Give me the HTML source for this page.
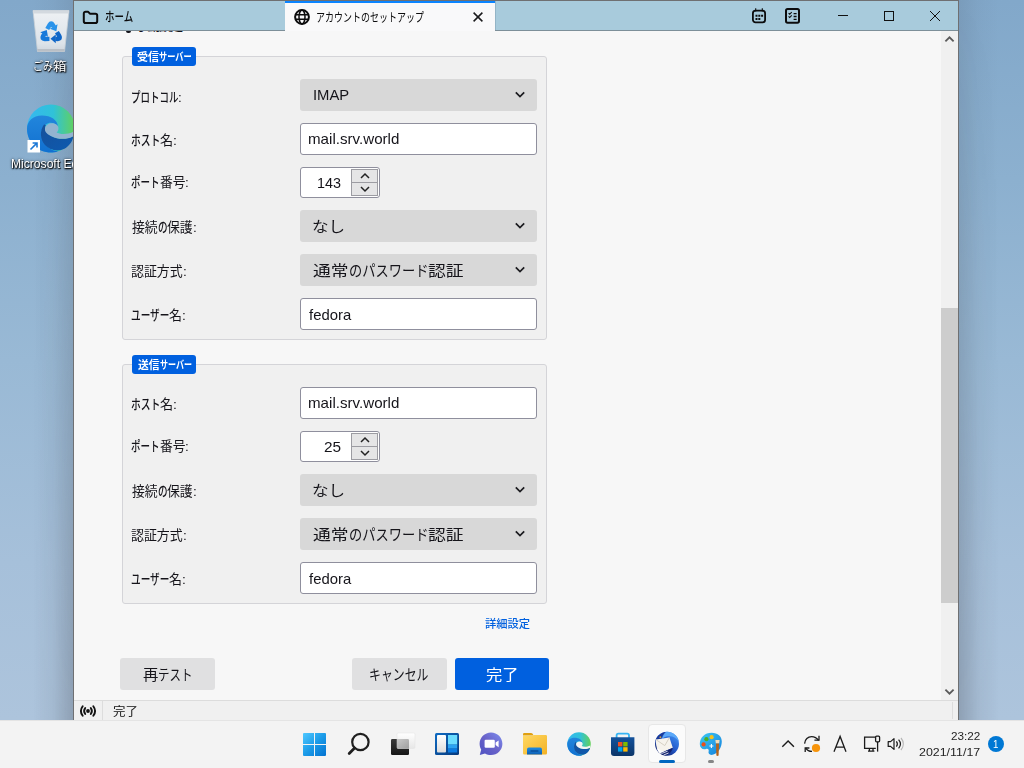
<!DOCTYPE html>
<html lang="ja">
<head>
<meta charset="utf-8">
<title>アカウントのセットアップ</title>
<style>
html,body{margin:0;padding:0;}
body{width:1024px;height:768px;overflow:hidden;position:relative;font-family:"Liberation Sans","Noto Sans CJK JP",sans-serif;background:#8aabc9;}
.abs,.t,.box{position:absolute;}
.t{white-space:pre;display:flex;align-items:center;}
.r{display:inline-block;overflow:visible;height:100%;}
.r>span{display:inline-block;transform-origin:0 50%;white-space:pre;}
svg{position:absolute;overflow:visible;}
.sel{position:absolute;left:300px;width:237px;height:32px;background:#d8d8d8;border-radius:3px;}
.inp{position:absolute;left:300px;width:237px;height:32px;box-sizing:border-box;background:#fff;border:1px solid #8f8f9d;border-radius:3px;}
.fs{position:absolute;left:122px;width:425px;box-sizing:border-box;background:#f0f0f0;border:1px solid #d4d4d8;border-radius:3px;}
.lg{position:absolute;left:132px;width:64px;height:19px;background:#0060df;border-radius:3px;}
.btn{position:absolute;top:658px;height:32px;background:#e0e0e1;border-radius:3px;}

</style>
</head>
<body>
<!-- desktop wallpaper -->
<div class="abs" style="left:0;top:0;width:1024px;height:720px;background:linear-gradient(180deg,#82a8ca 0%,#8cb0cf 25%,#99b9d5 50%,#a6c0da 78%,#adc4dc 100%);"></div>
<!-- window shadow on desktop -->
<div class="abs" style="left:33px;top:0;width:40px;height:720px;background:linear-gradient(90deg,rgba(62,66,76,0) 0%,rgba(62,66,76,.04) 50%,rgba(62,66,76,.12) 100%);"></div>
<div class="abs" style="left:33px;top:0;width:40px;height:720px;background:linear-gradient(90deg,rgba(62,66,76,0) 0%,rgba(62,66,76,.04) 50%,rgba(62,66,76,.17) 100%);-webkit-mask-image:linear-gradient(180deg,transparent 0%,#000 100%);mask-image:linear-gradient(180deg,transparent 0%,#000 100%);"></div>
<div class="abs" style="left:959px;top:0;width:40px;height:720px;background:linear-gradient(270deg,rgba(62,66,76,0) 0%,rgba(62,66,76,.04) 50%,rgba(62,66,76,.12) 100%);"></div>
<div class="abs" style="left:959px;top:0;width:40px;height:720px;background:linear-gradient(270deg,rgba(62,66,76,0) 0%,rgba(62,66,76,.04) 50%,rgba(62,66,76,.17) 100%);-webkit-mask-image:linear-gradient(180deg,transparent 0%,#000 100%);mask-image:linear-gradient(180deg,transparent 0%,#000 100%);"></div>

<!-- recycle bin icon -->
<svg style="left:31px;top:8px" width="40" height="46" viewBox="0 0 40 46">
  <defs>
    <linearGradient id="bin" x1="0" y1="0" x2="0" y2="1"><stop offset="0" stop-color="#eef1f4"/><stop offset=".8" stop-color="#dde3e9"/><stop offset="1" stop-color="#cfd6dd"/></linearGradient>
    <linearGradient id="rc" x1="0" y1="0" x2="1" y2="1"><stop offset="0" stop-color="#2aa0f0"/><stop offset="1" stop-color="#0a5fc0"/></linearGradient>
  </defs>
  <path d="M2 2.5 L38 2.5 L33.5 43.5 L6.5 43.5 Z" fill="url(#bin)" stroke="#c9d0d7" stroke-width=".8"/>
  <path d="M2 2.5 L38 2.5 L37.6 5.5 L2.4 5.5 Z" fill="#d3d9df"/>
  <path d="M6.2 41 L33.8 41 L33.5 43.5 L6.5 43.5 Z" fill="#b9bfc6"/>
  <g>
    <g transform="translate(20.2 25.3) rotate(0) scale(1.2)"><path d="M-3.3 -3.6 L-1.3 -7.1 Q0 -9.3 1.3 -7.1 L2.3 -5.3" fill="none" stroke="#2a93ea" stroke-width="3.7" stroke-linejoin="round"/><path d="M4.30 -1.79 L5.30 -7.45 L-1.10 -3.75 Z" fill="#2a93ea"/></g>
    <g transform="translate(20.2 25.3) rotate(120) scale(1.2)"><path d="M-3.3 -3.6 L-1.3 -7.1 Q0 -9.3 1.3 -7.1 L2.3 -5.3" fill="none" stroke="#0f66c8" stroke-width="3.7" stroke-linejoin="round"/><path d="M4.30 -1.79 L5.30 -7.45 L-1.10 -3.75 Z" fill="#0f66c8"/></g>
    <g transform="translate(20.2 25.3) rotate(240) scale(1.2)"><path d="M-3.3 -3.6 L-1.3 -7.1 Q0 -9.3 1.3 -7.1 L2.3 -5.3" fill="none" stroke="#1779da" stroke-width="3.7" stroke-linejoin="round"/><path d="M4.30 -1.79 L5.30 -7.45 L-1.10 -3.75 Z" fill="#1779da"/></g>
  </g>
</svg>

<!-- edge desktop icon (clipped by window) -->
<svg style="left:27px;top:104px" width="48" height="50" viewBox="0 0 48 50">
  <defs>
    <linearGradient id="e1" x1="0" y1="0" x2="1" y2="0"><stop offset="0" stop-color="#35b8f1"/><stop offset=".55" stop-color="#30c2d8"/><stop offset="1" stop-color="#63d15a"/></linearGradient>
    <linearGradient id="e2" x1="0" y1="0" x2="0" y2="1"><stop offset="0" stop-color="#2286dc"/><stop offset="1" stop-color="#1170d0"/></linearGradient>
    <linearGradient id="e3" x1="0" y1="0" x2="1" y2="1"><stop offset="0" stop-color="#16509a"/><stop offset="1" stop-color="#0d5ab0"/></linearGradient>
  </defs>
  <circle cx="24" cy="24.5" r="24" fill="url(#e1)"/>
  <path d="M0 25 C0 17 6 11.5 15 11.5 C24 11.5 30.5 16 31 22.5 C29 19.5 25 18 21.5 19 C16 21 13 27 15 34 C17 41 23 46.5 31 47.4 C28.8 48.2 26.5 48.5 24 48.5 C10.7 48.5 0 38 0 25 Z" fill="url(#e2)"/>
  <path d="M17 20.5 C12.5 27 13 35 18 41 C23 46.5 31 48 38 44.5 C43 41.5 46 36 46.4 32 C40 35.8 31 35.5 25 32.5 C20 30 17 26 18.8 21 Z" fill="url(#e3)"/>
  <path d="M18 24.5 C18.6 19.5 26 17.5 30 21 C32.5 23.5 31.5 27 29.5 28.6 C33 30.5 40 31 46.9 27.6 C47.1 29.2 46.9 30.8 46.4 32.2 C40 35.8 31 35.5 25 32.5 C21 30.5 17.5 28.5 18 24.5 Z" fill="#93b3d0"/>
  <rect x=".5" y="36" width="12.5" height="12.5" fill="#fff"/>
  <path d="M3.5 45.5 L9.6 39.4 M5.6 39 L10 39 L10 43.4" fill="none" stroke="#1b78d6" stroke-width="1.6"/>
</svg>

<div class="t" id="t31" style="left:32.62px;top:58.22px;font-size:12.00px;line-height:18px;height:18px;color:#fff;font-weight:400;text-shadow:0 1px 2px rgba(0,0,0,.95),1px 1px 1px rgba(0,0,0,.8),0 0 3px rgba(0,0,0,.6);"><span class="r" style="width:20.04px"><span style="transform:scaleX(0.8343)">ごみ</span></span><span class="r" style="width:13.46px"><span style="transform:scaleX(1.1203)">箱</span></span></div>
<div class="t" id="t32" style="left:11.06px;top:155.03px;font-size:12.00px;line-height:18px;height:18px;color:#fff;font-weight:400;text-shadow:0 1px 2px rgba(0,0,0,.95),1px 1px 1px rgba(0,0,0,.8),0 0 3px rgba(0,0,0,.6);"><span class="r" style="width:80.72px"><span style="transform:scaleX(1.0084)">Microsoft Edge</span></span></div>

<!-- taskbar -->
<div class="abs" style="left:0;top:720px;width:1024px;height:48px;background:#f3f3f3;"></div>

<!-- app window -->
<div class="abs" style="left:73px;top:0;width:886px;height:720px;background:#6f7072;"></div>
<div class="abs" style="left:74px;top:1px;width:884px;height:29px;background:#a8cbdc;"></div>
<div class="abs" style="left:74px;top:30px;width:884px;height:1px;background:#7d8f99;"></div>
<div class="abs" style="left:74px;top:31px;width:884px;height:669px;background:#f7f7f7;"></div>
<!-- active tab -->
<div class="abs" style="left:285px;top:1px;width:210px;height:30px;background:#f9f9fa;"></div>
<div class="abs" style="left:495px;top:1px;width:1px;height:29px;background:#93b4c6;"></div>
<div class="abs" style="left:285px;top:1px;width:210px;height:2px;background:#0a84ff;"></div>
<!-- tab icons -->
<svg style="left:82px;top:9px" width="17" height="16" viewBox="0 0 17 16"><path d="M1.8 4.6 C1.8 3.4 2.5 2.8 3.6 2.8 L6.2 2.8 L7.9 4.7 L13.4 4.7 C14.6 4.7 15.2 5.4 15.2 6.4 L15.2 12.2 C15.2 13.4 14.6 14 13.4 14 L3.6 14 C2.5 14 1.8 13.4 1.8 12.2 Z" fill="none" stroke="#0c0c0d" stroke-width="2" stroke-linejoin="round"/></svg>
<svg style="left:294px;top:9px" width="16" height="16" viewBox="0 0 16 16" fill="none" stroke="#0c0c0d"><circle cx="8" cy="8" r="6.9" stroke-width="2"/><ellipse cx="8" cy="8" rx="3" ry="6.9" stroke-width="1.5"/><path d="M1.5 5.7 H14.5 M1.5 10.3 H14.5" stroke-width="1.5"/></svg>
<svg style="left:472px;top:11px" width="12" height="12" viewBox="0 0 12 12"><path d="M1.6 1.6 L10.4 10.4 M10.4 1.6 L1.6 10.4" stroke="#1a1a1c" stroke-width="1.5" fill="none"/></svg>
<!-- calendar / tasks toolbar buttons -->
<svg style="left:751px;top:7px" width="16" height="17" viewBox="0 0 16 17"><rect x="1.9" y="3.7" width="12.2" height="11.6" rx="2.6" fill="none" stroke="#0c0c0d" stroke-width="1.8"/><path d="M4.7 1.2 V4.4 M11.3 1.2 V4.4" stroke="#0c0c0d" stroke-width="1.1"/><path d="M4.5 7.7 h2v2h-2z M7.3 7.7 h2v2h-2z M10.1 7.7 h2v2h-2z M4.5 10.9 h2v2h-2z M7.3 10.9 h2v2h-2z" fill="#0c0c0d"/></svg>
<svg style="left:784px;top:7px" width="17" height="18" viewBox="0 0 17 18"><rect x="2" y="2.1" width="13" height="13.6" rx="1.6" fill="none" stroke="#0c0c0d" stroke-width="2"/><path d="M4.6 6.2 l1.1 1.1 l2-2.2 M4.6 9.4 l1.1 1.1 l2-2.2" stroke="#0c0c0d" stroke-width="1.1" fill="none"/><path d="M9.6 6.6 H12.6 M9.6 9.5 H12.6 M9.6 12.4 H12.6" stroke="#0c0c0d" stroke-width="1.3" fill="none"/></svg>
<!-- window controls -->
<svg style="left:838px;top:10px" width="12" height="12" viewBox="0 0 12 12"><path d="M0 5.5 H10" stroke="#111" stroke-width="1"/></svg>
<svg style="left:883px;top:10px" width="12" height="12" viewBox="0 0 12 12"><rect x="1.5" y="1.5" width="9" height="9" fill="none" stroke="#111" stroke-width="1"/></svg>
<svg style="left:929px;top:10px" width="12" height="12" viewBox="0 0 12 12"><path d="M1 1 L11 11 M11 1 L1 11" stroke="#111" stroke-width="1"/></svg>

<!-- scrollbar -->
<div class="abs" style="left:941px;top:31px;width:17px;height:669px;background:#f0f0f0;"></div>
<div class="abs" style="left:941px;top:308px;width:17px;height:295px;background:#cdcdcd;"></div>
<svg style="left:944px;top:35px" width="11" height="8" viewBox="0 0 11 8"><path d="M1.4 6.4 L5.5 2.3 L9.6 6.4" fill="none" stroke="#5a5a5a" stroke-width="1.8"/></svg>
<svg style="left:944px;top:688px" width="11" height="8" viewBox="0 0 11 8"><path d="M1.4 1.6 L5.5 5.7 L9.6 1.6" fill="none" stroke="#5a5a5a" stroke-width="1.8"/></svg>

<!-- fieldset 1 -->
<div class="fs" style="top:56px;height:284px;"></div>
<div class="lg" style="top:47px;"></div>
<div class="sel" style="top:79px;"></div>
<div class="inp" style="top:123px;"></div>
<div class="sel" style="top:210px;"></div>
<div class="sel" style="top:254px;"></div>
<div class="inp" style="top:298px;"></div>
<!-- fieldset 2 -->
<div class="fs" style="top:364px;height:240px;"></div>
<div class="lg" style="top:355px;"></div>
<div class="inp" style="top:387px;"></div>
<div class="sel" style="top:474px;"></div>
<div class="sel" style="top:518px;"></div>
<div class="inp" style="top:562px;"></div>

<!-- number spinners -->
<div class="inp" style="top:167px;width:80px;height:31px;"></div>
<div class="abs" style="left:351px;top:169px;width:27px;height:27px;box-sizing:border-box;border:1px solid #9c9ca2;background:#e5e5e6;"></div>
<div class="abs" style="left:352px;top:182px;width:25px;height:1px;background:#9c9ca2;"></div>
<svg style="left:360px;top:172px" width="10" height="8" viewBox="0 0 10 8"><path d="M1 6 L5 2 L9 6" fill="none" stroke="#222" stroke-width="1.5"/></svg>
<svg style="left:360px;top:185px" width="10" height="8" viewBox="0 0 10 8"><path d="M1 2 L5 6 L9 2" fill="none" stroke="#222" stroke-width="1.5"/></svg>
<div class="inp" style="top:431px;width:80px;height:31px;"></div>
<div class="abs" style="left:351px;top:433px;width:27px;height:27px;box-sizing:border-box;border:1px solid #9c9ca2;background:#e5e5e6;"></div>
<div class="abs" style="left:352px;top:446px;width:25px;height:1px;background:#9c9ca2;"></div>
<svg style="left:360px;top:436px" width="10" height="8" viewBox="0 0 10 8"><path d="M1 6 L5 2 L9 6" fill="none" stroke="#222" stroke-width="1.5"/></svg>
<svg style="left:360px;top:449px" width="10" height="8" viewBox="0 0 10 8"><path d="M1 2 L5 6 L9 2" fill="none" stroke="#222" stroke-width="1.5"/></svg>

<!-- select chevrons -->
<svg style="left:515px;top:91px" width="10" height="8" viewBox="0 0 10 8"><path d="M.8 1.4 L5 5.6 L9.2 1.4" fill="none" stroke="#1b1b1f" stroke-width="1.7"/></svg>
<svg style="left:515px;top:222px" width="10" height="8" viewBox="0 0 10 8"><path d="M.8 1.4 L5 5.6 L9.2 1.4" fill="none" stroke="#1b1b1f" stroke-width="1.7"/></svg>
<svg style="left:515px;top:266px" width="10" height="8" viewBox="0 0 10 8"><path d="M.8 1.4 L5 5.6 L9.2 1.4" fill="none" stroke="#1b1b1f" stroke-width="1.7"/></svg>
<svg style="left:515px;top:486px" width="10" height="8" viewBox="0 0 10 8"><path d="M.8 1.4 L5 5.6 L9.2 1.4" fill="none" stroke="#1b1b1f" stroke-width="1.7"/></svg>
<svg style="left:515px;top:530px" width="10" height="8" viewBox="0 0 10 8"><path d="M.8 1.4 L5 5.6 L9.2 1.4" fill="none" stroke="#1b1b1f" stroke-width="1.7"/></svg>

<!-- buttons -->
<div class="btn" style="left:120px;width:95px;"></div>
<div class="btn" style="left:352px;width:95px;"></div>
<div class="btn" style="left:455px;width:94px;background:#0060df;"></div>

<!-- status bar -->
<div class="abs" style="left:74px;top:700px;width:884px;height:20px;background:#f0f0f0;border-top:1px solid #dcdcdc;box-sizing:border-box;"></div>
<div class="abs" style="left:102px;top:701px;width:1px;height:19px;background:#dddddd;"></div>
<div class="abs" style="left:952px;top:702px;width:1px;height:17px;background:#dddddd;"></div>
<svg style="left:80px;top:703px" width="16" height="16" viewBox="0 0 16 16" fill="none" stroke="#111" stroke-width="1.9" stroke-linecap="round"><circle cx="8" cy="8" r="1.9" fill="#111" stroke="none"/><path d="M5.2 5.0 C3.9 6.8 3.9 9.2 5.2 11.0 M10.8 5.0 C12.1 6.8 12.1 9.2 10.8 11.0 M2.7 3.2 C.6 6 .6 10 2.7 12.8 M13.3 3.2 C15.4 6 15.4 10 13.3 12.8"/></svg>

<!-- taskbar top line -->
<div class="abs" style="left:0;top:720px;width:1024px;height:1px;background:#e4e4e4;"></div>
<!-- start -->
<svg style="left:303px;top:733px" width="23" height="23" viewBox="0 0 23 23">
  <defs><linearGradient id="win" x1="0" y1="0" x2="1" y2="1"><stop offset="0" stop-color="#4fc8ff"/><stop offset=".5" stop-color="#1b9be8"/><stop offset="1" stop-color="#0372d0"/></linearGradient></defs>
  <path d="M1 0 H11 V11 H0 V1 Q0 0 1 0 Z M12 0 H22 Q23 0 23 1 V11 H12 Z M0 12 H11 V23 H1 Q0 23 0 22 Z M12 12 H23 V22 Q23 23 22 23 H12 Z" fill="url(#win)"/>
</svg>
<!-- search -->
<svg style="left:346px;top:731px" width="26" height="26" viewBox="0 0 26 26"><circle cx="14.4" cy="11" r="8.2" fill="none" stroke="#1f1f1f" stroke-width="2.2"/><path d="M8.6 17 L3.2 22.4" stroke="#1f1f1f" stroke-width="2.8" stroke-linecap="round"/></svg>
<!-- task view -->
<svg style="left:390px;top:732px" width="26" height="24" viewBox="0 0 26 24">
  <defs><linearGradient id="tv1" x1="0" y1="0" x2="0" y2="1"><stop offset="0" stop-color="#ffffff"/><stop offset="1" stop-color="#e6e6e6"/></linearGradient>
  <linearGradient id="tv2" x1="0" y1="0" x2="0" y2="1"><stop offset="0" stop-color="#3a3a3a"/><stop offset="1" stop-color="#161616"/></linearGradient>
  <linearGradient id="tv3" x1="0" y1="0" x2="1" y2="1"><stop offset="0" stop-color="#c9c9c9"/><stop offset="1" stop-color="#9f9f9f"/></linearGradient></defs>
  <rect x="1" y="7" width="18" height="16" rx="1.2" fill="url(#tv2)"/>
  <rect x="7" y="1" width="18" height="15.5" rx="1.2" fill="url(#tv1)" stroke="#e2e2e2" stroke-width=".5"/>
  <path d="M7 7 H17.8 Q19 7 19 8.2 V16.5 H8.2 Q7 16.5 7 15.3 Z" fill="url(#tv3)"/>
</svg>
<!-- widgets -->
<svg style="left:435px;top:732px" width="24" height="24" viewBox="0 0 24 24">
  <defs><linearGradient id="wg" x1="0" y1="0" x2="1" y2="1"><stop offset="0" stop-color="#0f6cc4"/><stop offset="1" stop-color="#06387a"/></linearGradient>
  <linearGradient id="wgw" x1="0" y1="0" x2="0" y2="1"><stop offset="0" stop-color="#ffffff"/><stop offset="1" stop-color="#dcdcdc"/></linearGradient></defs>
  <rect x="0" y="1" width="24" height="22" rx="1.5" fill="url(#wg)"/>
  <rect x="2" y="3" width="9" height="17.5" rx="1" fill="url(#wgw)"/>
  <rect x="13" y="3" width="9.2" height="9.6" fill="#6bdcff"/>
  <rect x="13" y="12.6" width="9.2" height="4" fill="#2ba2f2"/>
  <rect x="13" y="16.6" width="9.2" height="3.9" fill="#0a7ae2"/>
</svg>
<!-- chat -->
<svg style="left:478px;top:731px" width="26" height="26" viewBox="0 0 26 26">
  <defs><linearGradient id="ch" x1="1" y1="0" x2="0" y2="1"><stop offset="0" stop-color="#7d8ff0"/><stop offset=".5" stop-color="#6a63c9"/><stop offset="1" stop-color="#4f52c2"/></linearGradient></defs>
  <path d="M13 1.4 C19.4 1.4 24.4 6.4 24.4 12.7 C24.4 19 19.4 24 13 24 C10.8 24 8.8 23.4 7 22.4 L1.8 24 L3.2 18.6 C2.2 16.9 1.6 14.9 1.6 12.7 C1.6 6.4 6.6 1.4 13 1.4 Z" fill="url(#ch)"/>
  <rect x="6.6" y="8.8" width="10.2" height="8" rx="1.2" fill="#fff"/>
  <path d="M17.6 11.6 L20.6 9.4 V16.2 L17.6 14 Z" fill="#fff"/>
</svg>
<!-- explorer -->
<svg style="left:523px;top:732px" width="24" height="24" viewBox="0 0 24 24">
  <defs><linearGradient id="fo" x1="0" y1="0" x2="1" y2="1"><stop offset="0" stop-color="#ffd963"/><stop offset="1" stop-color="#f3b225"/></linearGradient>
  <linearGradient id="fb" x1="0" y1="0" x2="0" y2="1"><stop offset="0" stop-color="#1d8be0"/><stop offset="1" stop-color="#0d5fb4"/></linearGradient></defs>
  <path d="M0 2.2 Q0 1 1.2 1 H8 Q9 1 9.6 1.8 L10.6 3.4 H0 Z" fill="#e0a010"/>
  <path d="M0 3.8 H9.4 L10.8 3 H22.8 Q24 3 24 4.2 V21.2 Q24 22.4 22.8 22.4 H1.2 Q0 22.4 0 21.2 Z" fill="url(#fo)"/>
  <path d="M4 17.4 Q4 15.6 5.8 15.6 H17.2 Q19 15.6 19 17.4 V22.4 H4 Z" fill="url(#fb)"/>
  <rect x="7.4" y="18.2" width="8.2" height="1.6" rx=".8" fill="#0a4f9c"/>
</svg>
<!-- edge -->
<svg style="left:567px;top:732px" width="24" height="24" viewBox="0 0 48 49">
  <circle cx="24" cy="24.5" r="24" fill="url(#e1)"/>
  <path d="M0 25 C0 17 6 11.5 15 11.5 C24 11.5 30.5 16 31 22.5 C29 19.5 25 18 21.5 19 C16 21 13 27 15 34 C17 41 23 46.5 31 47.4 C28.8 48.2 26.5 48.5 24 48.5 C10.7 48.5 0 38 0 25 Z" fill="url(#e2)"/>
  <path d="M17 20.5 C12.5 27 13 35 18 41 C23 46.5 31 48 38 44.5 C43 41.5 46 36 46.4 32 C40 35.8 31 35.5 25 32.5 C20 30 17 26 18.8 21 Z" fill="url(#e3)"/>
  <path d="M18 24.5 C18.6 19.5 26 17.5 30 21 C32.5 23.5 31.5 27 29.5 28.6 C33 30.5 40 31 46.9 27.6 C47.1 29.2 46.9 30.8 46.4 32.2 C40 35.8 31 35.5 25 32.5 C21 30.5 17.5 28.5 18 24.5 Z" fill="#f3f3f3"/>
</svg>
<!-- store -->
<svg style="left:610px;top:732px" width="26" height="25" viewBox="0 0 26 25">
  <defs><linearGradient id="st" x1="0" y1="0" x2="0" y2="1"><stop offset="0" stop-color="#13529c"/><stop offset="1" stop-color="#0c3568"/></linearGradient></defs>
  <path d="M6.6 6 V3.4 Q6.6 1.6 8.4 1.6 H17.2 Q19 1.6 19 3.4 V6" fill="none" stroke="#35b4f4" stroke-width="1.8"/>
  <path d="M1 5.2 H24.4 V21 Q24.4 24 21.4 24 H4 Q1 24 1 21 Z" fill="url(#st)"/>
  <rect x="8" y="10" width="4.4" height="4.4" fill="#f25022"/>
  <rect x="13.2" y="10" width="4.4" height="4.4" fill="#7fba00"/>
  <rect x="8" y="15.2" width="4.4" height="4.4" fill="#00a4ef"/>
  <rect x="13.2" y="15.2" width="4.4" height="4.4" fill="#ffb900"/>
</svg>
<!-- thunderbird (active) -->
<div class="abs" style="left:648px;top:724px;width:38px;height:39px;box-sizing:border-box;background:#fbfbfb;border:1px solid #e7e7e7;border-radius:4px;"></div>
<svg style="left:654px;top:731px" width="26" height="26" viewBox="0 0 26 26">
  <defs><linearGradient id="tb" x1=".85" y1=".1" x2=".2" y2=".95"><stop offset="0" stop-color="#3f8ff2"/><stop offset=".5" stop-color="#2358c8"/><stop offset="1" stop-color="#131f66"/></linearGradient></defs>
  <circle cx="13" cy="12.8" r="12" fill="url(#tb)"/>
  <path d="M1.6 9.4 C3 4.6 7 1.4 12 .9 C9.4 2.8 7.8 5.4 7.2 8.6 Z" fill="#1a3a9a"/>
  <path d="M12 .9 C18.2 .3 23.6 4.6 24.8 10.4 C22 6 17 4.4 12.5 5.6 C10.6 6.1 9 7.1 7.9 8.4 C8.6 5.2 10 2.6 12 .9 Z" fill="#5ba8f8"/>
  <path d="M2 8.6 L15.4 6.4 L18.8 16.8 L6.2 22.2 C3.4 19.6 1.4 14.6 2 8.6 Z" fill="#f6f3ec"/>
  <path d="M2.2 8.8 L10.8 14.6 L15.4 6.6" fill="none" stroke="#d3cdc0" stroke-width=".9"/>
  <path d="M2.6 16.6 C5 19 8.2 20.6 11.6 20 L6.4 23 C4.4 21.4 3.2 19.2 2.6 16.6 Z" fill="#fff"/>
  <path d="M6.2 22.2 L18.8 16.8 C18 20.6 15 23.8 11 24.6 C9.2 24.2 7.6 23.4 6.2 22.2 Z" fill="#15236c"/>
  <path d="M7.4 22.6 L13.6 20.2 M9.6 24 L14.6 22" stroke="#e9ecf8" stroke-width=".9" fill="none"/>
  <circle cx="6.4" cy="6.2" r=".9" fill="#c9a24a"/>
</svg>
<div class="abs" style="left:659px;top:760px;width:16px;height:3px;background:#0067c0;border-radius:1.5px;"></div>
<!-- paint -->
<svg style="left:699px;top:732px" width="24" height="25" viewBox="0 0 24 25">
  <defs><linearGradient id="pt" x1="0" y1="0" x2="1" y2="1"><stop offset="0" stop-color="#3cc8f4"/><stop offset="1" stop-color="#1580dc"/></linearGradient></defs>
  <path d="M12.6 .8 C19 .8 22.8 4.6 22.8 9.6 C22.8 15 19.4 21.6 13.6 22.8 C10.6 23.4 9 21.6 9.6 19.6 C10.2 17.6 9 16.4 7 17 C3.6 18 .8 16 .8 12 C.8 5.6 6 .8 12.6 .8 Z" fill="url(#pt)"/>
  <circle cx="4.6" cy="12.4" r="2.1" fill="#e8501c"/>
  <circle cx="7.4" cy="7.2" r="2.1" fill="#4caf22"/>
  <circle cx="12.6" cy="5.2" r="2.1" fill="#f8c21a"/>
  <path d="M12.4 12 V16 M10.4 14 H14.4" stroke="#fff" stroke-width="1.1"/>
  <path d="M16.4 8 H20.6 L20.2 11.4 H16.8 Z" fill="#f1dcb8"/>
  <path d="M17 11.4 H20 L19.6 23.6 Q18.5 24.4 17.4 23.6 Z" fill="#b4641c"/>
</svg>
<div class="abs" style="left:708px;top:760px;width:6px;height:3px;background:#868686;border-radius:1.5px;"></div>

<!-- tray -->
<svg style="left:780px;top:736px" width="16" height="16" viewBox="0 0 16 16"><path d="M2.3 10.8 L8.1 5 L13.9 10.8" fill="none" stroke="#1b1b1b" stroke-width="1.4"/></svg>
<svg style="left:802px;top:734px" width="20" height="20" viewBox="0 0 20 20" fill="none" stroke="#1b1b1b" stroke-width="1.3">
  <path d="M2.6 9.6 C2.8 5.4 6 2.6 9.6 2.6 C12.6 2.6 15 4.2 16.6 6.4"/>
  <path d="M12.4 6.2 H17 V1.8"/>
  <path d="M10 17.4 C7.4 17.4 5 16 3.6 13.8"/>
  <path d="M7.4 14 H3.2 V18"/>
  <circle cx="14" cy="14" r="4.1" fill="#f7940a" stroke="none"/>
</svg>
<svg style="left:832px;top:734px" width="16" height="20" viewBox="0 0 16 20"><path d="M2 17.8 L8.1 2.4 L14 17.8 M4.2 13.2 H12" fill="none" stroke="#1b1b1b" stroke-width="1.3"/></svg>
<svg style="left:862px;top:734px" width="20" height="20" viewBox="0 0 20 20" fill="none" stroke="#1b1b1b" stroke-width="1.3">
  <path d="M13.8 3.2 H2.6 V14.4 H13.8"/>
  <path d="M6 17.2 H12.4 M7.4 14.4 V17.2 M11 14.4 V17.2"/>
  <rect x="13.6" y="2.2" width="4" height="5.6" rx="1"/>
  <path d="M15.6 7.8 V17.6"/>
</svg>
<svg style="left:886px;top:736px" width="20" height="16" viewBox="0 0 20 16" fill="none" stroke="#1b1b1b" stroke-width="1.2">
  <path d="M2.2 5.6 H4.6 L8 2.6 V13.4 L4.6 10.4 H2.2 Z" stroke-linejoin="round"/>
  <path d="M10.4 5.4 C11.6 7 11.6 9 10.4 10.6"/>
  <path d="M12.6 3.6 C14.8 6.2 14.8 9.8 12.6 12.4"/>
  <path d="M15 2 C18 5.6 18 10.4 15 14" stroke="#b5b5b5"/>
</svg>
<div class="abs" style="left:988px;top:736px;width:16px;height:16px;border-radius:8px;background:#0078d4;"></div>

<!-- clipped heading at the top of the scrolled content -->
<div class="abs" style="left:124px;top:31px;width:62px;height:2px;overflow:hidden;"><div style="position:absolute;left:1px;top:-13px;font-size:13px;line-height:16px;font-weight:700;color:#15141a;white-space:nowrap;letter-spacing:-1.6px;"><span style="display:inline-block;width:11px;letter-spacing:0">▾</span>手動設定</div></div>
<div class="abs" style="left:126px;top:31px;width:5px;height:2px;background:#15141a;border-radius:0 0 2px 2px;"></div>

<!-- text layer -->
<div class="t" id="t0" style="left:104.85px;top:8.19px;font-size:12.60px;line-height:19px;height:19px;color:#0c0c0d;font-weight:400;"><span class="r" style="width:28.17px;font-weight:500"><span style="transform:scaleX(0.7531)">ホーム</span></span></div>
<div class="t" id="t1" style="left:316.22px;top:8.51px;font-size:12.00px;line-height:18px;height:18px;color:#0c0c0d;font-weight:400;"><span class="r" style="width:107.92px"><span style="transform:scaleX(0.7494)">アカウントのセットアップ</span></span></div>
<div class="t" id="t2" style="left:137.37px;top:48.90px;font-size:11.00px;line-height:16px;height:16px;color:#fff;font-weight:700;"><span class="r" style="width:22.02px"><span style="transform:scaleX(1.0009)">受信</span></span><span class="r" style="width:32.72px"><span style="transform:scaleX(0.7454)">サーバー</span></span></div>
<div class="t" id="t3" style="left:138.07px;top:356.90px;font-size:11.00px;line-height:16px;height:16px;color:#fff;font-weight:700;"><span class="r" style="width:21.52px"><span style="transform:scaleX(0.9780)">送信</span></span><span class="r" style="width:31.96px"><span style="transform:scaleX(0.7283)">サーバー</span></span></div>
<div class="t" id="t4" style="left:131.12px;top:87.67px;font-size:13.33px;line-height:20px;height:20px;color:#15141a;font-weight:400;"><span class="r" style="width:47.39px;font-weight:500"><span style="transform:scaleX(0.7112)">プロトコル</span></span><span class="r" style="width:3.76px"><span style="transform:scaleX(1.0160)">:</span></span></div>
<div class="t" id="t5" style="left:130.95px;top:130.98px;font-size:13.33px;line-height:20px;height:20px;color:#15141a;font-weight:400;"><span class="r" style="width:29.36px;font-weight:500"><span style="transform:scaleX(0.7344)">ホスト</span></span><span class="r" style="width:13.14px"><span style="transform:scaleX(0.9862)">名</span></span><span class="r" style="width:3.89px"><span style="transform:scaleX(1.0492)">:</span></span></div>
<div class="t" id="t6" style="left:131.19px;top:172.55px;font-size:13.33px;line-height:20px;height:20px;color:#15141a;font-weight:400;"><span class="r" style="width:28.58px;font-weight:500"><span style="transform:scaleX(0.7149)">ポート</span></span><span class="r" style="width:25.59px"><span style="transform:scaleX(0.9600)">番号</span></span><span class="r" style="width:3.78px"><span style="transform:scaleX(1.0212)">:</span></span></div>
<div class="t" id="t7" style="left:131.90px;top:217.95px;font-size:13.33px;line-height:20px;height:20px;color:#15141a;font-weight:400;"><span class="r" style="width:25.74px"><span style="transform:scaleX(0.9655)">接続</span></span><span class="r" style="width:9.58px;font-weight:500"><span style="transform:scaleX(0.7190)">の</span></span><span class="r" style="width:25.74px"><span style="transform:scaleX(0.9655)">保護</span></span><span class="r" style="width:3.80px"><span style="transform:scaleX(1.0271)">:</span></span></div>
<div class="t" id="t8" style="left:131.38px;top:262.06px;font-size:13.33px;line-height:20px;height:20px;color:#15141a;font-weight:400;"><span class="r" style="width:51.74px"><span style="transform:scaleX(0.9704)">認証方式</span></span><span class="r" style="width:3.82px"><span style="transform:scaleX(1.0324)">:</span></span></div>
<div class="t" id="t9" style="left:130.78px;top:305.74px;font-size:13.33px;line-height:20px;height:20px;color:#15141a;font-weight:400;"><span class="r" style="width:38.43px;font-weight:500"><span style="transform:scaleX(0.7244)">ユーザー</span></span><span class="r" style="width:12.97px"><span style="transform:scaleX(0.9728)">名</span></span><span class="r" style="width:3.83px"><span style="transform:scaleX(1.0349)">:</span></span></div>
<div class="t" id="t10" style="left:313.16px;top:84.38px;font-size:15.00px;line-height:22px;height:22px;color:#15141a;font-weight:400;"><span class="r" style="width:36.25px"><span style="transform:scaleX(0.9880)">IMAP</span></span></div>
<div class="t" id="t11" style="left:307.71px;top:127.88px;font-size:15.00px;line-height:22px;height:22px;color:#15141a;font-weight:400;"><span class="r" style="width:91.39px"><span style="transform:scaleX(1.0089)">mail.srv.world</span></span></div>
<div class="t" id="t12" style="left:316.80px;top:172.25px;font-size:15.00px;line-height:22px;height:22px;color:#15141a;font-weight:400;"><span class="r" style="width:24.01px"><span style="transform:scaleX(0.9593)">143</span></span></div>
<div class="t" id="t13" style="left:312.32px;top:215.95px;font-size:15.00px;line-height:22px;height:22px;color:#15141a;font-weight:400;"><span class="r" style="width:33.08px"><span style="transform:scaleX(1.1022)">なし</span></span></div>
<div class="t" id="t14" style="left:313.15px;top:259.75px;font-size:15.00px;line-height:22px;height:22px;color:#15141a;font-weight:400;"><span class="r" style="width:35.54px"><span style="transform:scaleX(1.1842)">通常</span></span><span class="r" style="width:79.38px"><span style="transform:scaleX(0.8818)">のパスワード</span></span><span class="r" style="width:35.54px"><span style="transform:scaleX(1.1842)">認証</span></span></div>
<div class="t" id="t15" style="left:308.93px;top:304.19px;font-size:15.00px;line-height:22px;height:22px;color:#15141a;font-weight:400;"><span class="r" style="width:42.16px"><span style="transform:scaleX(0.9910)">fedora</span></span></div>
<div class="t" id="t16" style="left:130.95px;top:394.98px;font-size:13.33px;line-height:20px;height:20px;color:#15141a;font-weight:400;"><span class="r" style="width:29.36px;font-weight:500"><span style="transform:scaleX(0.7344)">ホスト</span></span><span class="r" style="width:13.14px"><span style="transform:scaleX(0.9862)">名</span></span><span class="r" style="width:3.89px"><span style="transform:scaleX(1.0492)">:</span></span></div>
<div class="t" id="t17" style="left:131.19px;top:436.55px;font-size:13.33px;line-height:20px;height:20px;color:#15141a;font-weight:400;"><span class="r" style="width:28.58px;font-weight:500"><span style="transform:scaleX(0.7149)">ポート</span></span><span class="r" style="width:25.59px"><span style="transform:scaleX(0.9600)">番号</span></span><span class="r" style="width:3.78px"><span style="transform:scaleX(1.0212)">:</span></span></div>
<div class="t" id="t18" style="left:131.90px;top:481.95px;font-size:13.33px;line-height:20px;height:20px;color:#15141a;font-weight:400;"><span class="r" style="width:25.74px"><span style="transform:scaleX(0.9655)">接続</span></span><span class="r" style="width:9.58px;font-weight:500"><span style="transform:scaleX(0.7190)">の</span></span><span class="r" style="width:25.74px"><span style="transform:scaleX(0.9655)">保護</span></span><span class="r" style="width:3.80px"><span style="transform:scaleX(1.0271)">:</span></span></div>
<div class="t" id="t19" style="left:131.38px;top:526.06px;font-size:13.33px;line-height:20px;height:20px;color:#15141a;font-weight:400;"><span class="r" style="width:51.74px"><span style="transform:scaleX(0.9704)">認証方式</span></span><span class="r" style="width:3.82px"><span style="transform:scaleX(1.0324)">:</span></span></div>
<div class="t" id="t20" style="left:130.78px;top:569.74px;font-size:13.33px;line-height:20px;height:20px;color:#15141a;font-weight:400;"><span class="r" style="width:38.43px;font-weight:500"><span style="transform:scaleX(0.7244)">ユーザー</span></span><span class="r" style="width:12.97px"><span style="transform:scaleX(0.9728)">名</span></span><span class="r" style="width:3.83px"><span style="transform:scaleX(1.0349)">:</span></span></div>
<div class="t" id="t21" style="left:307.71px;top:391.88px;font-size:15.00px;line-height:22px;height:22px;color:#15141a;font-weight:400;"><span class="r" style="width:91.39px"><span style="transform:scaleX(1.0089)">mail.srv.world</span></span></div>
<div class="t" id="t22" style="left:324.19px;top:436.25px;font-size:15.00px;line-height:22px;height:22px;color:#15141a;font-weight:400;"><span class="r" style="width:17.10px"><span style="transform:scaleX(1.0248)">25</span></span></div>
<div class="t" id="t23" style="left:312.32px;top:479.95px;font-size:15.00px;line-height:22px;height:22px;color:#15141a;font-weight:400;"><span class="r" style="width:33.08px"><span style="transform:scaleX(1.1022)">なし</span></span></div>
<div class="t" id="t24" style="left:313.15px;top:523.75px;font-size:15.00px;line-height:22px;height:22px;color:#15141a;font-weight:400;"><span class="r" style="width:35.54px"><span style="transform:scaleX(1.1842)">通常</span></span><span class="r" style="width:79.38px"><span style="transform:scaleX(0.8818)">のパスワード</span></span><span class="r" style="width:35.54px"><span style="transform:scaleX(1.1842)">認証</span></span></div>
<div class="t" id="t25" style="left:308.93px;top:568.19px;font-size:15.00px;line-height:22px;height:22px;color:#15141a;font-weight:400;"><span class="r" style="width:42.16px"><span style="transform:scaleX(0.9910)">fedora</span></span></div>
<div class="t" id="t26" style="left:484.98px;top:616.00px;font-size:11.00px;line-height:16px;height:16px;color:#0060df;font-weight:500;"><span class="r" style="width:45.14px"><span style="transform:scaleX(1.0260)">詳細設定</span></span></div>
<div class="t" id="t27" style="left:142.95px;top:663.50px;font-size:15.00px;line-height:22px;height:22px;color:#15141a;font-weight:400;"><span class="r" style="width:15.37px"><span style="transform:scaleX(1.0239)">再</span></span><span class="r" style="width:34.32px"><span style="transform:scaleX(0.7625)">テスト</span></span></div>
<div class="t" id="t28" style="left:369.41px;top:663.75px;font-size:15.00px;line-height:22px;height:22px;color:#15141a;font-weight:400;"><span class="r" style="width:59.41px"><span style="transform:scaleX(0.7920)">キャンセル</span></span></div>
<div class="t" id="t29" style="left:486.08px;top:663.75px;font-size:15.00px;line-height:22px;height:22px;color:#fff;font-weight:400;"><span class="r" style="width:32.53px"><span style="transform:scaleX(1.0838)">完了</span></span></div>
<div class="t" id="t30" style="left:112.89px;top:703.22px;font-size:12.00px;line-height:18px;height:18px;color:#111;font-weight:400;"><span class="r" style="width:24.99px"><span style="transform:scaleX(1.0405)">完了</span></span></div>
<div class="t" id="t33" style="left:951.24px;top:728.22px;font-size:11.50px;line-height:17px;height:17px;color:#1f1f1f;font-weight:400;"><span class="r" style="width:29.36px"><span style="transform:scaleX(1.0202)">23:22</span></span></div>
<div class="t" id="t34" style="left:918.73px;top:743.62px;font-size:11.50px;line-height:17px;height:17px;color:#1f1f1f;font-weight:400;"><span class="r" style="width:61.19px"><span style="transform:scaleX(1.0791)">2021/11/17</span></span></div>
<div class="t" id="t35" style="left:992.91px;top:737.05px;font-size:10.00px;line-height:15px;height:15px;color:#fff;font-weight:400;"><span class="r" style="width:5.42px"><span style="transform:scaleX(0.9736)">1</span></span></div>
</body>
</html>
